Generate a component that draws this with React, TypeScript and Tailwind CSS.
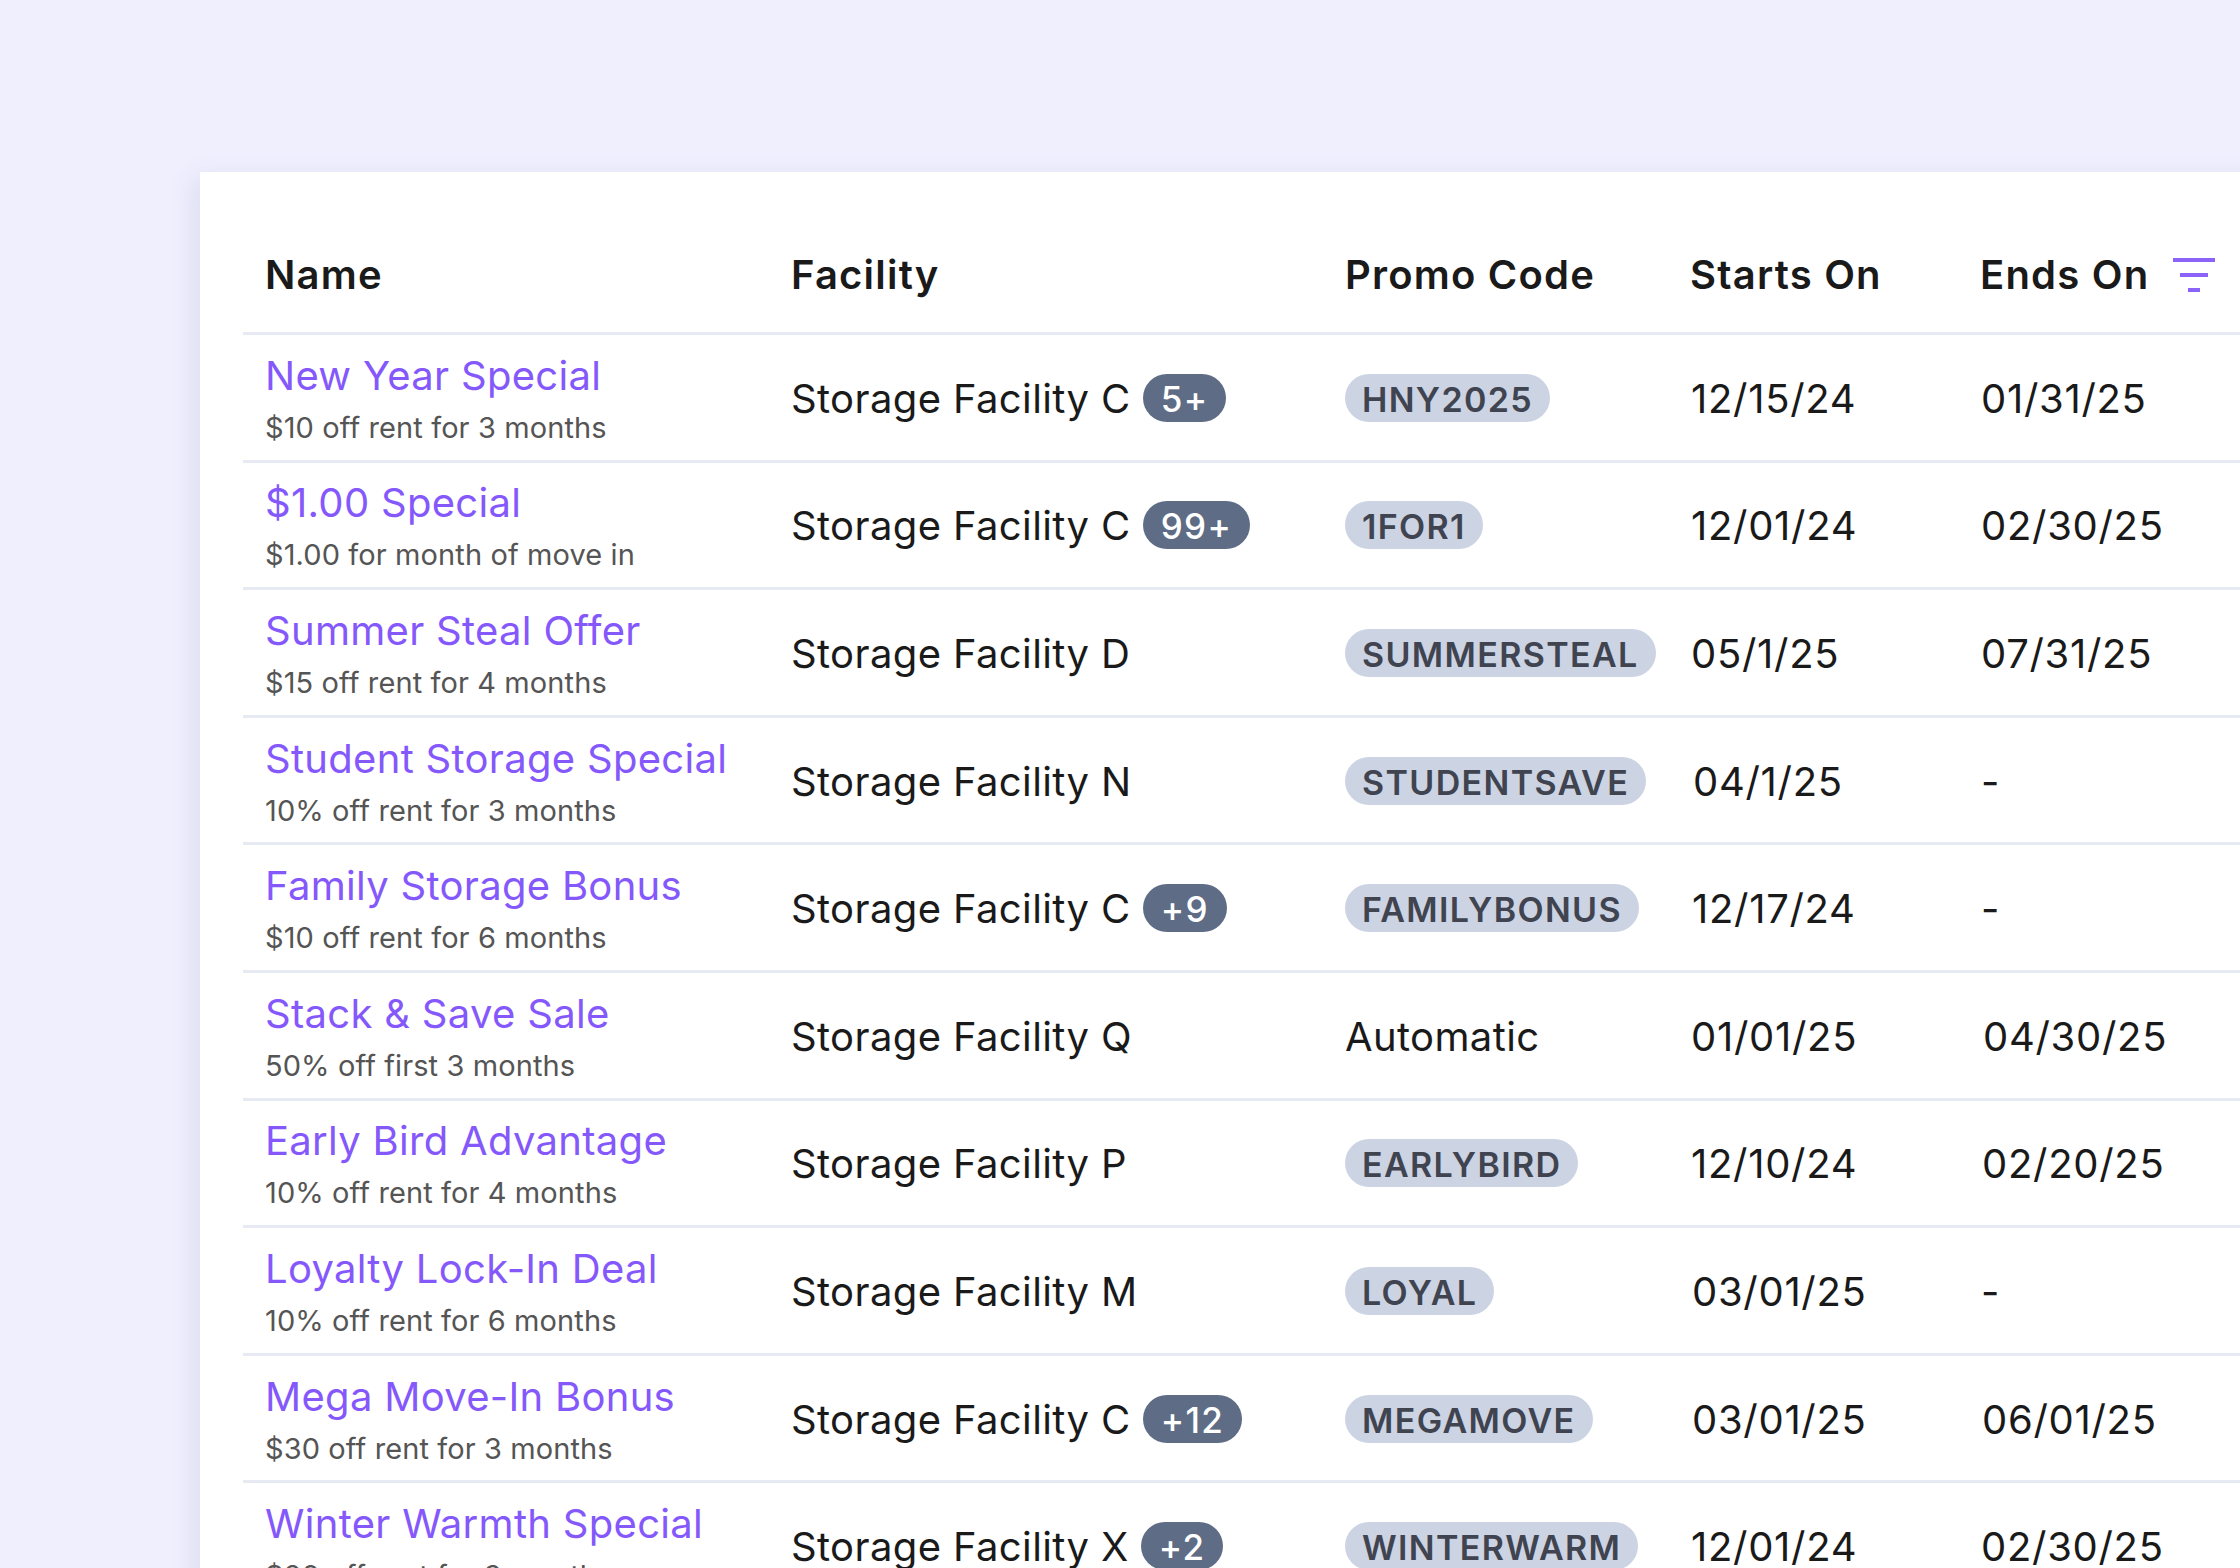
const promos = [
  { name: 'New Year Special', desc: '$10 off rent for 3 months', facility: 'Storage Facility C', count: '5+', code: 'HNY2025', starts: '12/15/24', ends: '01/31/25' },
  { name: '$1.00 Special', desc: '$1.00 for month of move in', facility: 'Storage Facility C', count: '99+', code: '1FOR1', starts: '12/01/24', ends: '02/30/25' },
  { name: 'Summer Steal Offer', desc: '$15 off rent for 4 months', facility: 'Storage Facility D', code: 'SUMMERSTEAL', starts: '05/1/25', ends: '07/31/25' },
  { name: 'Student Storage Special', desc: '10% off rent for 3 months', facility: 'Storage Facility N', code: 'STUDENTSAVE', starts: '04/1/25', startsClass: 'ml-[3px]', ends: '-' },
  { name: 'Family Storage Bonus', desc: '$10 off rent for 6 months', facility: 'Storage Facility C', count: '+9', code: 'FAMILYBONUS', starts: '12/17/24', startsClass: 'ml-[2px]', ends: '-' },
  { name: 'Stack & Save Sale', desc: '50% off first 3 months', facility: 'Storage Facility Q', starts: '01/01/25', ends: '04/30/25', endsClass: 'ml-[3px]' },
  { name: 'Early Bird Advantage', desc: '10% off rent for 4 months', facility: 'Storage Facility P', code: 'EARLYBIRD', starts: '12/10/24', ends: '02/20/25', endsClass: 'ml-[2px]' },
  { name: 'Loyalty Lock-In Deal', desc: '10% off rent for 6 months', facility: 'Storage Facility M', code: 'LOYAL', starts: '03/01/25', startsClass: 'ml-[2px]', ends: '-' },
  { name: 'Mega Move-In Bonus', desc: '$30 off rent for 3 months', facility: 'Storage Facility C', count: '+12', code: 'MEGAMOVE', starts: '03/01/25', startsClass: 'ml-[2px]', ends: '06/01/25', endsClass: 'ml-[2px]' },
  { name: 'Winter Warmth Special', desc: '$20 off rent for 3 months', facility: 'Storage Facility X', count: '+2', code: 'WINTERWARM', starts: '12/01/24', ends: '02/30/25' },
];

function FilterIcon() {
  return (
    <svg width="42" height="34" viewBox="0 0 42 34" className="ml-6 shrink-0">
      <rect x="0" y="0" width="42" height="4" fill="#8b63f8" />
      <rect x="7" y="15" width="28" height="4" fill="#8b63f8" />
      <rect x="15" y="30" width="12" height="4" fill="#8b63f8" />
    </svg>
  );
}

function Count({ value }: { value?: string }) {
  if (!value) return null;
  return (
    <span className="mb-[2px] ml-3 rounded-full bg-[#5e6c85] px-[18px] pt-[3px] text-[35px] font-medium leading-[45px] tracking-[1.4px] text-white">
      {value}
    </span>
  );
}

export default function App() {
  return (
    <div className="h-[1568px] w-[2240px] overflow-hidden bg-[#efeffe] pl-[200px] pt-[172px] font-['Inter',sans-serif] text-[#1a1a1a]">
      <div className="h-[1500px] w-[2100px] bg-white pl-[43px] pt-[46px] shadow-[-6px_6px_24px_rgba(90,90,160,0.12)]">
        <div className="grid h-[117px] grid-cols-[525px_554px_345px_290px_1fr] items-center border-b-[3px] border-[#e6ebf3] pl-[23px] text-[40px] font-semibold tracking-[1.2px]">
          <div className="-ml-[1px]">Name</div>
          <div>Facility</div>
          <div>Promo Code</div>
          <div>Starts On</div>
          <div className="flex items-center">
            Ends On
            <FilterIcon />
          </div>
        </div>
        {promos.map((p) => (
          <div key={p.name} className="grid h-[127.6px] grid-cols-[525px_554px_345px_290px_1fr] items-center border-b-[3px] border-[#e6ebf3] pl-[23px] pt-[3px] text-[40px] tracking-[0.38px]">
            <div className="-ml-[1px]">
              <div className="leading-[48px] tracking-[0.3px] text-[#8458fb]">{p.name}</div>
              <div className="mt-[10px] text-[29px] leading-[36px] tracking-[0.1px] text-[#555]">{p.desc}</div>
            </div>
            <div className="flex items-center">
              {p.facility}
              <Count value={p.count} />
            </div>
            <div className="flex items-center">
              {p.code ? (
                <span className="mb-[2px] rounded-full bg-[#ccd3e3] px-[17px] pt-[3px] text-[34px] font-semibold leading-[45px] tracking-[1.35px] text-[#3f4450]">
                  {p.code}
                </span>
              ) : (
                'Automatic'
              )}
            </div>
            <div className={`ml-[1px] tracking-[0.7px] ${p.startsClass ?? ''}`}>{p.starts}</div>
            <div className={`ml-[1px] tracking-[0.7px] ${p.endsClass ?? ''}`}>{p.ends}</div>
          </div>
        ))}
      </div>
    </div>
  );
}
